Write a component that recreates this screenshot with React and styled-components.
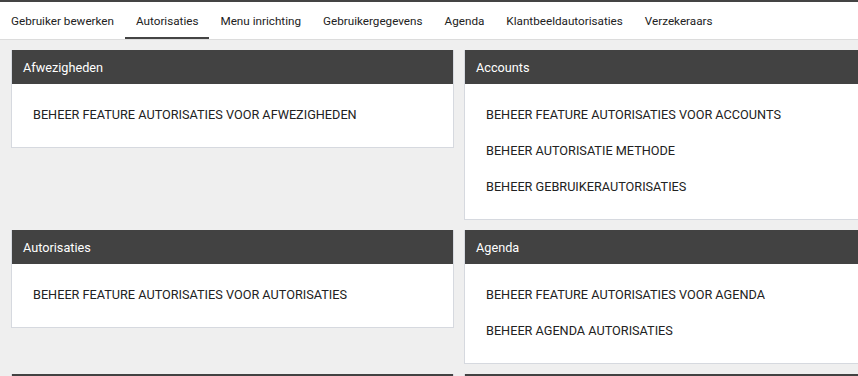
import React from "react";
import styled, { createGlobalStyle } from "styled-components";

const Global = createGlobalStyle`
  html, body { margin: 0; padding: 0; }
  body {
    background: #efefef;
    font-family: Roboto, "Liberation Sans", Arial, sans-serif;
    overflow: hidden;
    width: 858px;
    height: 376px;
  }
`;

const Page = styled.div`
  display: flex;
  flex-direction: column;
  min-width: 918px;
`;

const TopStrip = styled.div`
  height: 2px;
  background: #444444;
`;

const TabBar = styled.nav`
  display: flex;
  background: #ffffff;
  border-bottom: 1px solid #dcdcdc;
  height: 37px;
`;

const Tab = styled.div`
  display: flex;
  align-items: center;
  padding: 2px 11px 0;
  font-size: 11.7px;
  color: #222222;
  white-space: nowrap;
  box-sizing: border-box;
  border-bottom: 2px solid ${(p) => (p.$active ? "#444444" : "transparent")};
`;

const Grid = styled.div`
  display: grid;
  grid-template-columns: 443px 443px;
  gap: 10px;
  padding: 10px 11px;
  align-items: start;
`;

const Card = styled.section`
  background: #ffffff;
  border: 1px solid #d6d9df;
  border-top: none;
`;

const CardHeader = styled.header`
  background: #424242;
  color: #ffffff;
  height: 34px;
  display: flex;
  align-items: center;
  padding: 0 11px;
  font-size: 12.7px;
`;

const CardBody = styled.ul`
  list-style: none;
  margin: 0;
  padding: 12px 21px 15px;
`;

const Item = styled.li`
  height: 36px;
  display: flex;
  align-items: center;
  font-size: 12.7px;
  color: #222222;
  text-transform: uppercase;
`;

const tabs = [
  "Gebruiker bewerken",
  "Autorisaties",
  "Menu inrichting",
  "Gebruikergegevens",
  "Agenda",
  "Klantbeeldautorisaties",
  "Verzekeraars",
];

const cards = [
  { title: "Afwezigheden", items: ["Beheer feature autorisaties voor afwezigheden"] },
  {
    title: "Accounts",
    items: [
      "Beheer feature autorisaties voor accounts",
      "Beheer autorisatie methode",
      "Beheer gebruikerautorisaties",
    ],
  },
  { title: "Autorisaties", items: ["Beheer feature autorisaties voor autorisaties"] },
  {
    title: "Agenda",
    items: ["Beheer feature autorisaties voor agenda", "Beheer agenda autorisaties"],
  },
  { title: "", items: [] },
  { title: "", items: [] },
];

export default function App() {
  return (
    <>
      <Global />
      <Page>
        <TopStrip />
        <TabBar>
          {tabs.map((t) => (
            <Tab key={t} $active={t === "Autorisaties"}>
              {t}
            </Tab>
          ))}
        </TabBar>
        <Grid>
          {cards.map((c, idx) => (
            <Card key={idx}>
              <CardHeader>{c.title}</CardHeader>
              <CardBody>
                {c.items.map((i) => (
                  <Item key={i}>{i}</Item>
                ))}
              </CardBody>
            </Card>
          ))}
        </Grid>
      </Page>
    </>
  );
}
